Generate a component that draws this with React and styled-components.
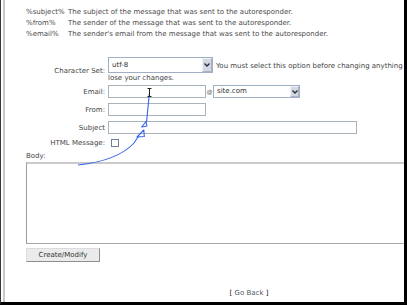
import React from "react";
import styled, { createGlobalStyle } from "styled-components";

const GlobalStyle = createGlobalStyle`
  html, body {
    margin: 0;
    padding: 0;
    background: #ffffff;
  }
  body {
    font-family: "DejaVu Sans", Verdana, sans-serif;
  }
`;

const Frame = styled.div`
  position: relative;
  box-sizing: border-box;
  width: 407px;
  height: 305px;
  padding-left: 2px;
  border-left: 1px solid #3a3a3a;
  border-right: 3px solid #000000;
  border-bottom: 3px solid #000000;
  overflow: hidden;
  background: #ffffff;
`;

const Page = styled.div`
  box-sizing: border-box;
  width: 485px;
  height: 100%;
  padding-left: 21px;
  padding-right: 16px;
  border-left: 2px solid #c8c8c8;
  color: #444444;
  font-size: 7px;
`;

const Legend = styled.div`
  display: grid;
  grid-template-columns: 42px 1fr;
  padding-top: 7px;
  line-height: 11px;
  color: #4a4a4a;
  white-space: nowrap;
`;

const Form = styled.div`
  margin-top: 17px;
  display: flex;
  flex-direction: column;
`;

const FieldRow = styled.div`
  display: grid;
  grid-template-columns: 79px 1fr;
  column-gap: 3px;
  align-items: center;
  margin-top: ${(p) => p.$mt || 0}px;
  min-height: ${(p) => p.$h || 13}px;
`;

const Label = styled.div`
  text-align: right;
  white-space: nowrap;
  line-height: 10px;
  color: #444444;
`;

const Value = styled.div`
  display: flex;
  align-items: center;
`;

const ValueStack = styled.div`
  display: flex;
  flex-direction: column;
`;

const Line = styled.div`
  display: flex;
  align-items: center;
  height: ${(p) => p.$h}px;
  line-height: ${(p) => p.$h}px;
  white-space: nowrap;
`;

const Hint = styled.span`
  margin-left: 3px;
  padding-top: 2px;
  white-space: nowrap;
`;

const TextInput = styled.input`
  box-sizing: border-box;
  width: ${(p) => p.$w}px;
  height: 13px;
  margin: 0;
  padding: 0 2px;
  border: 1px solid #a9b3bb;
  background: #ffffff;
  font: inherit;
  outline: none;
`;

const SelectBox = styled.div`
  box-sizing: border-box;
  display: flex;
  align-items: center;
  width: ${(p) => p.$w}px;
  height: ${(p) => p.$h}px;
  border: 1px solid #9fb0c4;
  background: #ffffff;
`;

const SelectText = styled.span`
  flex: 1;
  padding-left: 3px;
  color: #333333;
  line-height: 1;
`;

const SelectArrow = styled.span`
  box-sizing: border-box;
  display: flex;
  align-items: center;
  justify-content: center;
  width: ${(p) => p.$w}px;
  height: 100%;
  background: #d3d8e2;
  border: 1px solid #eef1f6;
  border-right-color: #aab3c2;
  border-bottom-color: #aab3c2;
`;

const At = styled.span`
  width: 7px;
  text-align: center;
  font-size: 6px;
  color: #555555;
`;

const Checkbox = styled.span`
  box-sizing: border-box;
  display: block;
  width: 8px;
  height: 8px;
  margin-left: 3px;
  border: 1px solid #6f8096;
  background: #ffffff;
`;

const BodyLabel = styled.div`
  margin-top: 3px;
  line-height: 9px;
  color: #444444;
`;

const BodyArea = styled.textarea`
  display: block;
  box-sizing: border-box;
  width: 100%;
  height: 82px;
  margin: 1px 0 0;
  padding: 2px;
  border: 1px solid #a8a8a8;
  border-top: 2px solid #cacaca;
  border-left-color: #9c9c9c;
  resize: none;
  font: inherit;
  outline: none;
`;

const SubmitButton = styled.button`
  display: block;
  box-sizing: border-box;
  width: 74px;
  height: 14px;
  margin-top: 4px;
  padding: 0;
  background: #ebebeb;
  border: 1px solid;
  border-color: #dcdcdc #8e8e8e #8e8e8e #dcdcdc;
  color: #333333;
  font-family: "DejaVu Sans", Verdana, sans-serif;
  font-size: 7px;
  line-height: 12px;
`;

const Footer = styled.div`
  margin-top: 26px;
  text-align: center;
  line-height: 10px;
  color: #111111;
`;

const BackLink = styled.a`
  color: #4d5966;
  text-decoration: none;
`;

const Overlay = styled.svg`
  position: absolute;
  left: 0;
  top: 0;
  width: 407px;
  height: 306px;
  pointer-events: none;
`;

function Chevron() {
  return (
    <svg width="6" height="4" viewBox="0 0 6 4">
      <path d="M0.5 0.5 L3 3 L5.5 0.5" fill="none" stroke="#2b2b2b" strokeWidth="1.3" />
    </svg>
  );
}

function Dropdown({ value, width, height, arrow }) {
  return (
    <SelectBox $w={width} $h={height}>
      <SelectText>{value}</SelectText>
      <SelectArrow $w={arrow}>
        <Chevron />
      </SelectArrow>
    </SelectBox>
  );
}

const legend = [
  ["%subject%", "The subject of the message that was sent to the autoresponder."],
  ["%from%", "The sender of the message that was sent to the autoresponder."],
  ["%email%", "The sender's email from the message that was sent to the autoresponder."],
];

export default function App() {
  return (
    <>
      <GlobalStyle />
      <Frame>
        <Page>
          <Legend>
            {legend.map(([tag, text]) => (
              <React.Fragment key={tag}>
                <span>{tag}</span>
                <span>{text}</span>
              </React.Fragment>
            ))}
          </Legend>

          <Form>
            <FieldRow $h={27}>
              <Label>Character Set:</Label>
              <ValueStack>
                <Line $h={16}>
                  <Dropdown value="utf-8" width={105} height={16} arrow={10} />
                  <Hint>You must select this option before changing anything or you will</Hint>
                </Line>
                <Line $h={11}>lose your changes.</Line>
              </ValueStack>
            </FieldRow>

            <FieldRow $mt={1}>
              <Label>Email:</Label>
              <Value>
                <TextInput $w={98} readOnly />
                <At>@</At>
                <Dropdown value="site.com" width={87} height={13} arrow={9} />
              </Value>
            </FieldRow>

            <FieldRow $mt={5}>
              <Label>From:</Label>
              <Value>
                <TextInput $w={98} readOnly />
              </Value>
            </FieldRow>

            <FieldRow $mt={5}>
              <Label>Subject</Label>
              <Value>
                <TextInput $w={249} readOnly />
              </Value>
            </FieldRow>

            <FieldRow $mt={3} $h={12}>
              <Label>HTML Message:</Label>
              <Value>
                <Checkbox />
              </Value>
            </FieldRow>
          </Form>

          <BodyLabel>Body:</BodyLabel>
          <BodyArea readOnly />
          <SubmitButton type="button">Create/Modify</SubmitButton>

          <Footer>
            [ <BackLink href="#">Go Back</BackLink> ]
          </Footer>
        </Page>

        <Overlay viewBox="0 0 407 306">
          <g fill="none" stroke="#3564ec" strokeWidth="1.1" strokeLinejoin="round">
            <path d="M77 165 C 96 163, 120 157, 133 143 L 137 137" />
            <polygon points="136,137 142.8,130 143.3,136.5" />
            <polygon points="140.6,127 145,121.6 146,126" />
            <path d="M145.6 122 L 148.3 93.5" />
          </g>
          <g stroke="#222222" strokeWidth="1" fill="none">
            <path d="M148.5 88.5 L148.5 96.5" />
            <path d="M146.5 88.5 L150.5 88.5" />
            <path d="M146.5 96.5 L150.5 96.5" />
          </g>
        </Overlay>
      </Frame>
    </>
  );
}
